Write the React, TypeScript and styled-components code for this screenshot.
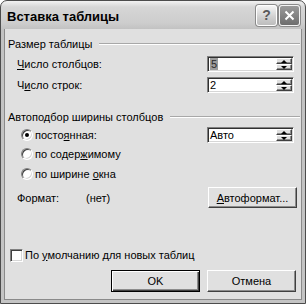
import React from 'react';
import styled, { createGlobalStyle } from 'styled-components';

const GlobalStyle = createGlobalStyle`
  html, body {
    margin: 0;
    padding: 0;
    background: #ffffff;
  }
  body {
    font-family: "Liberation Sans", Arial, sans-serif;
    font-size: 11px;
    color: #000;
  }
`;

const Window = styled.div`
  width: 306px;
  height: 304px;
  box-sizing: border-box;
  display: flex;
  flex-direction: column;
  border: 1px solid #4c4c4c;
  border-radius: 7px 7px 0 0;
  background: linear-gradient(#f2f2f2 0px, #d6d6d6 6px, #cdcdcd 22px, #c2c2c2 28px, #c4c4c4 100%);
  overflow: hidden;
`;

const TitleBar = styled.div`
  height: 28px;
  flex: none;
  display: flex;
  align-items: center;
  padding: 0 5px 0 6px;
`;

const Title = styled.div`
  flex: 1;
  font-size: 13px;
  font-weight: bold;
  padding-top: 2px;
  color: #000;
`;

const CaptionButton = styled.div<{ $dark?: boolean }>`
  width: 21px;
  height: 21px;
  box-sizing: border-box;
  margin-left: 2px;
  border: 1px solid ${p => (p.$dark ? '#f4f4f4' : '#ffffff')};
  border-radius: 3px;
  display: flex;
  align-items: center;
  justify-content: center;
  background: ${p =>
    p.$dark
      ? 'linear-gradient(#9a9a9a, #6e6e6e)'
      : 'linear-gradient(#f4f4f4, #cfcfcf 60%, #bdbdbd)'};
  box-shadow: 0 0 0 1px #8a8a8a;
  color: ${p => (p.$dark ? '#fff' : '#5a5a5a')};
  font-size: 14px;
  font-weight: bold;
`;

const Frame = styled.div`
  flex: 1;
  display: flex;
  padding: 0 3px 3px 3px;
`;

const Client = styled.div`
  flex: 1;
  display: flex;
  flex-direction: column;
  background: #e0e0e0;
  border: 1px solid #8a8a8a;
  border-top: none;
`;

const GroupHeader = styled.div<{ $top: number }>`
  display: flex;
  align-items: center;
  height: 14px;
  margin-top: ${p => p.$top}px;
  padding: 0 1px 0 3px;
  gap: 7px;
`;

const GroupLine = styled.div`
  flex: 1;
  height: 0;
  border-top: 1px solid #a8a8a8;
  border-bottom: 1px solid #ffffff;
`;

const Row = styled.div<{ $top: number; $height?: number; $left?: number }>`
  display: flex;
  align-items: center;
  height: ${p => p.$height ?? 16}px;
  margin-top: ${p => p.$top}px;
  padding-left: ${p => p.$left ?? 12}px;
`;

const Label = styled.div<{ $width?: number }>`
  width: ${p => (p.$width ? `${p.$width}px` : 'auto')};
  flex: ${p => (p.$width ? 'none' : '1')};
  white-space: nowrap;
`;

const Key = styled.span`
  text-decoration: underline;
`;

const SpinBox = styled.div`
  margin-left: auto;
  margin-right: 7px;
  width: 87px;
  height: 16px;
  box-sizing: border-box;
  display: flex;
  background: #fff;
  border: 1px solid;
  border-color: #808080 #ffffff #ffffff #808080;
  box-shadow: inset 1px 1px #303030, inset -1px -1px #d6d6d6;
  padding: 1px;
`;

const SpinValue = styled.div`
  flex: 1;
  display: flex;
  align-items: center;
  padding-left: 1px;
  line-height: 12px;
`;

const Selected = styled.span`
  background: #9c9c9c;
  color: #2a2a2a;
  padding: 0 1px;
`;

const SpinButtons = styled.div`
  width: 16px;
  display: flex;
  flex-direction: column;
`;

const SpinButton = styled.div`
  flex: 1;
  box-sizing: border-box;
  display: flex;
  align-items: center;
  justify-content: center;
  background: #e0e0e0;
  border: 1px solid;
  border-color: #ffffff #404040 #404040 #ffffff;
  box-shadow: inset -1px -1px #8c8c8c;
`;

const Arrow = styled.div<{ $down?: boolean }>`
  width: 0;
  height: 0;
  border-left: 3px solid transparent;
  border-right: 3px solid transparent;
  ${p => (p.$down ? 'border-top: 3px solid #000;' : 'border-bottom: 3px solid #000;')}
`;

const Radio = styled.div`
  width: 12px;
  height: 12px;
  box-sizing: border-box;
  flex: none;
  border-radius: 50%;
  background: #fff;
  border: 1px solid;
  border-color: #808080 #ffffff #ffffff #808080;
  box-shadow: inset 1px 1px #404040, inset -1px -1px #d6d6d6;
  display: flex;
  align-items: center;
  justify-content: center;
  margin-right: 2px;
`;

const Dot = styled.div`
  width: 4px;
  height: 4px;
  border-radius: 50%;
  background: #000;
`;

const CheckBox = styled.div`
  width: 13px;
  height: 13px;
  box-sizing: border-box;
  flex: none;
  background: #fff;
  border: 1px solid;
  border-color: #808080 #ffffff #ffffff #808080;
  box-shadow: inset 1px 1px #404040, inset -1px -1px #d6d6d6;
  margin-right: 2px;
`;

const Button = styled.div<{ $default?: boolean }>`
  width: 89px;
  height: 22px;
  box-sizing: border-box;
  display: flex;
  align-items: center;
  justify-content: center;
  background: #e0e0e0;
  border: 1px solid;
  border-color: ${p => (p.$default ? '#000' : '#ffffff #404040 #404040 #ffffff')};
  box-shadow: ${p =>
    p.$default
      ? 'inset 1px 1px #ffffff, inset -1px -1px #404040, inset -2px -2px #8c8c8c'
      : 'inset -1px -1px #8c8c8c'};
`;

const ButtonRow = styled.div`
  display: flex;
  justify-content: flex-end;
  gap: 7px;
  height: 22px;
  margin-top: 7px;
  padding-right: 5px;
`;

const ValueText = styled.div`
  width: 69px;
  flex: none;
`;

const FormatButton = styled(Button)`
  margin-left: auto;
  margin-right: 4px;
  height: 21px;
`;

export default function App() {
  return (
    <>
      <GlobalStyle />
      <Window>
        <TitleBar>
          <Title>Вставка таблицы</Title>
          <CaptionButton>?</CaptionButton>
          <CaptionButton $dark>
            <svg width="11" height="11" viewBox="0 0 11 11">
              <path d="M1.5 1.5 L9.5 9.5 M9.5 1.5 L1.5 9.5" stroke="#fff" strokeWidth="2" />
            </svg>
          </CaptionButton>
        </TitleBar>
        <Frame>
          <Client>
            <GroupHeader $top={8}>
              <span>Размер таблицы</span>
              <GroupLine />
            </GroupHeader>
            <Row $top={5}>
              <Label>
                <Key>Ч</Key>исло столбцов:
              </Label>
              <SpinBox>
                <SpinValue>
                  <Selected>5</Selected>
                </SpinValue>
                <SpinButtons>
                  <SpinButton><Arrow /></SpinButton>
                  <SpinButton><Arrow $down /></SpinButton>
                </SpinButtons>
              </SpinBox>
            </Row>
            <Row $top={5}>
              <Label>
                Ч<Key>и</Key>сло строк:
              </Label>
              <SpinBox>
                <SpinValue>2</SpinValue>
                <SpinButtons>
                  <SpinButton><Arrow /></SpinButton>
                  <SpinButton><Arrow $down /></SpinButton>
                </SpinButtons>
              </SpinBox>
            </Row>
            <GroupHeader $top={17}>
              <span>Автоподбор ширины столбцов</span>
              <GroupLine />
            </GroupHeader>
            <Row $top={3} $left={16}>
              <Radio><Dot /></Radio>
              <Label>
                посто<Key>я</Key>нная:
              </Label>
              <SpinBox>
                <SpinValue>Авто</SpinValue>
                <SpinButtons>
                  <SpinButton><Arrow /></SpinButton>
                  <SpinButton><Arrow $down /></SpinButton>
                </SpinButtons>
              </SpinBox>
            </Row>
            <Row $top={3} $left={16}>
              <Radio />
              <Label>
                по содер<Key>ж</Key>имому
              </Label>
            </Row>
            <Row $top={4} $left={16}>
              <Radio />
              <Label>
                по ширине <Key>о</Key>кна
              </Label>
            </Row>
            <Row $top={5} $height={21}>
              <ValueText>Формат:</ValueText>
              <Label>(нет)</Label>
              <FormatButton>
                <span>
                  <Key>А</Key>втоформат...
                </span>
              </FormatButton>
            </Row>
            <Row $top={39} $left={5}>
              <CheckBox />
              <Label>
                По <Key>у</Key>молчанию для новых таблиц
              </Label>
            </Row>
            <ButtonRow>
              <Button $default>OK</Button>
              <Button>Отмена</Button>
            </ButtonRow>
          </Client>
        </Frame>
      </Window>
    </>
  );
}
